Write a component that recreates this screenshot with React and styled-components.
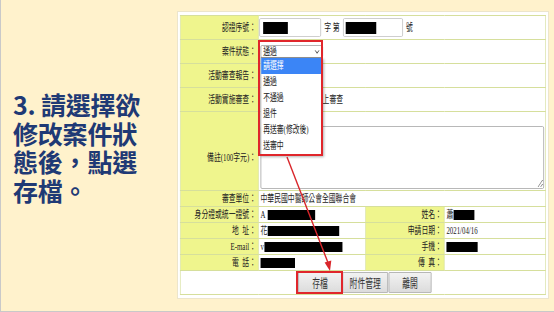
import styled, { createGlobalStyle } from 'styled-components';
import { ChevronDown } from 'lucide-react';

const GlobalStyle = createGlobalStyle`
  html, body {
    margin: 0;
    padding: 0;
  }
  body {
    width: 554px;
    height: 312px;
    overflow: hidden;
    background: #ffffff;
  }
`;

const Slide = styled.div`
  width: 554px;
  height: 312px;
  box-sizing: border-box;
  background: #fff2cc;
  border-left: 1px solid #c9c9c9;
  border-bottom: 1px solid #c9c9c9;
  display: flex;
  align-items: flex-start;
`;

const Caption = styled.h1`
  margin: 0;
  width: 177px;
  box-sizing: border-box;
  padding: 90px 0 0 12px;
  font-family: "Noto Sans CJK TC", "Noto Sans", sans-serif;
  font-weight: 700;
  font-size: 25px;
  line-height: 28.5px;
  color: #1f3a75;
  letter-spacing: -0.2px;
`;

const Frame = styled.div`
  position: relative;
  width: 370px;
  height: 286px;
  margin-top: 12px;
  background: #ffffff;
  box-shadow: 0 0 0 1px #ece5cc;
`;

// the pasted screenshot is squeezed horizontally
const Sheet = styled.div`
  width: 569px;
  box-sizing: border-box;
  padding: 3px 3px 0;
  transform: scaleX(0.65);
  transform-origin: 0 0;
  font-family: "Liberation Serif", "Noto Sans CJK TC", serif;
  font-size: 10.5px;
  color: #222;
`;

const Table = styled.table`
  width: 563px;
  border-collapse: collapse;
  table-layout: fixed;

  td {
    border: 1px solid #d6df9c;
    line-height: 14px;
    white-space: nowrap;
  }
`;

const Row = styled.tr`
  height: ${p => p.$h}px;
`;

const Label = styled.td`
  background: #eff58d;
  text-align: right;
  padding: ${p => p.$top || 0}px 3px 0 0;
  vertical-align: middle;
`;

const Value = styled.td`
  background: #ffffff;
  padding: ${p => p.$top || 0}px 2px 0 ${p => p.$left ?? 3}px;
  vertical-align: middle;
`;

const Field = styled.div`
  display: flex;
  align-items: center;
  gap: 5px;
`;

const InputBox = styled.span`
  display: inline-flex;
  align-items: center;
  width: ${p => p.$w}px;
  height: 19px;
  box-sizing: border-box;
  padding-left: ${p => p.$pad}px;
  border: 1px solid #c3c3c3;
  border-radius: 2px;
  background: #fff;
`;

const Redact = styled.span`
  display: inline-block;
  vertical-align: middle;
  width: ${p => p.$w}px;
  height: ${p => p.$h || 10}px;
  margin-left: ${p => p.$ml || 0}px;
  background: #000;
`;

const SelectWrap = styled.div`
  position: relative;
  width: 96px;
`;

const SelectBox = styled.div`
  height: 13px;
  box-sizing: border-box;
  border: 1px solid #a5a5a5;
  border-radius: 2px;
  padding: 0 3px;
  display: flex;
  align-items: center;
  justify-content: space-between;
  line-height: 11px;
  background: #fff;
`;

const OptionList = styled.div`
  position: absolute;
  top: 12px;
  left: 0;
  width: 96px;
  box-sizing: border-box;
  border: 1px solid #8e8e8e;
  background: #fff;
  box-shadow: 1px 2px 3px rgba(0, 0, 0, 0.3);
  z-index: 2;
`;

const Option = styled.div`
  height: 16px;
  line-height: 16px;
  padding: 0 3px;
  background: ${p => (p.$active ? '#3b85f6' : 'transparent')};
  color: ${p => (p.$active ? '#ffffff' : '#222')};
`;

const Note = styled.textarea`
  display: block;
  width: 436px;
  height: 63px;
  box-sizing: border-box;
  margin: 0;
  border: 1px solid #a9a9a9;
  border-radius: 2px;
  font: inherit;
`;

const ButtonBar = styled.div`
  display: flex;
  justify-content: center;
  gap: 1px;
  padding-left: 5px;
`;

const Button = styled.button`
  width: ${p => p.$w}px;
  height: 21px;
  box-sizing: border-box;
  border: 1px solid #ababab;
  border-radius: 1px;
  background: linear-gradient(#f2f2f2, #dcdcdc);
  font-family: "Noto Sans CJK TC", sans-serif;
  font-size: 12px;
  color: #333;
  padding: 0;
`;

const Callout = styled.div`
  position: absolute;
  left: ${p => p.$x}px;
  top: ${p => p.$y}px;
  width: ${p => p.$w}px;
  height: ${p => p.$h}px;
  box-sizing: border-box;
  border: 2px solid #e0262b;
  pointer-events: none;
  z-index: 3;
`;

const ArrowLayer = styled.svg`
  position: absolute;
  left: 0;
  top: 0;
  width: 370px;
  height: 286px;
  pointer-events: none;
  z-index: 3;
`;

const options = ['請選擇', '通過', '不通過', '退件', '再送審(修改後)', '送審中'];

export default function App() {
  return (
    <>
      <GlobalStyle />
      <Slide>
        <Caption>
          3. 請選擇欲<br />修改案件狀<br />態後，點選<br />存檔。
        </Caption>
        <Frame>
          <Sheet>
            <Table>
              <colgroup>
                <col style={{ width: 120 }} />
                <col style={{ width: 165 }} />
                <col style={{ width: 121 }} />
                <col />
              </colgroup>
              <tbody>
                <Row $h={24}>
                  <Label>認證序號：</Label>
                  <Value colSpan={3} $left={1}>
                    <Field>
                      <InputBox $w={95} $pad={5}><Redact $w={38} $h={12} /></InputBox>
                      <span>字 第</span>
                      <InputBox $w={92} $pad={3}><Redact $w={47} $h={12} /></InputBox>
                      <span>號</span>
                    </Field>
                  </Value>
                </Row>
                <Row $h={24}>
                  <Label>案件狀態：</Label>
                  <Value colSpan={3}>
                    <SelectWrap>
                      <SelectBox>
                        <span>通過</span>
                        <ChevronDown size={10} strokeWidth={2.2} />
                      </SelectBox>
                      <OptionList>
                        {options.map((o, i) => (
                          <Option key={o} $active={i === 0}>{o}</Option>
                        ))}
                      </OptionList>
                    </SelectWrap>
                  </Value>
                </Row>
                <Row $h={24}>
                  <Label>活動審查報告：</Label>
                  <Value colSpan={3} />
                </Row>
                <Row $h={24}>
                  <Label>活動實施審查：</Label>
                  <Value colSpan={3} $left={88}>線上審查</Value>
                </Row>
                <Row $h={79}>
                  <Label $top={13}>備註(100字元)：</Label>
                  <Value colSpan={3} $top={13}>
                    <Note defaultValue="" />
                  </Value>
                </Row>
                <Row $h={16}>
                  <Label>審查單位：</Label>
                  <Value colSpan={3}>中華民國中醫師公會全國聯合會</Value>
                </Row>
                <Row $h={16}>
                  <Label>身分證或統一證號：</Label>
                  <Value>A<Redact $w={73} $ml={3} /></Value>
                  <Label>姓名：</Label>
                  <Value>蕭<Redact $w={32} /></Value>
                </Row>
                <Row $h={16}>
                  <Label>地{'\u2002'}址：</Label>
                  <Value>花<Redact $w={110} /></Value>
                  <Label>申請日期：</Label>
                  <Value>2021/04/16</Value>
                </Row>
                <Row $h={16}>
                  <Label>E-mail：</Label>
                  <Value>v<Redact $w={120} $ml={1} /></Value>
                  <Label>手機：</Label>
                  <Value><Redact $w={48} /></Value>
                </Row>
                <Row $h={16}>
                  <Label>電{'\u2002'}話：</Label>
                  <Value><Redact $w={53} /></Value>
                  <Label>傳{'\u2002'}真：</Label>
                  <Value />
                </Row>
                <Row $h={24}>
                  <Value colSpan={4}>
                    <ButtonBar>
                      <Button $w={67}>存檔</Button>
                      <Button $w={70}>附件管理</Button>
                      <Button $w={66}>離開</Button>
                    </ButtonBar>
                  </Value>
                </Row>
              </tbody>
            </Table>
          </Sheet>
          <Callout $x={80} $y={28} $w={65} $h={116} />
          <Callout $x={118} $y={259} $w={47} $h={23} />
          <ArrowLayer viewBox="0 0 370 286">
            <line x1="109" y1="145" x2="150.5" y2="252" stroke="#d9262b" strokeWidth="1.4" />
            <path d="M152 259 L146.6 250.6 L153.3 248.4 Z" fill="#d9262b" />
          </ArrowLayer>
        </Frame>
      </Slide>
    </>
  );
}
